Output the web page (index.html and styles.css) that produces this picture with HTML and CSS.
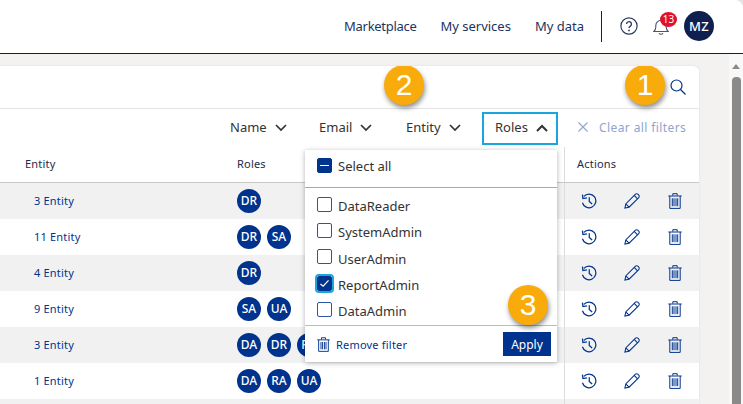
FILE: index.html
```html
<!DOCTYPE html>
<html>
<head>
    <title>Users</title>
    <link rel="stylesheet" href="styles.css">
</head>
<body>
    <svg class="defs">
        <symbol id="chev-down" viewBox="0 0 12 8"><path d="M1 1l5 5 5-5" fill="none" stroke="currentColor" stroke-width="1.700"/></symbol>
        <symbol id="chev-up" viewBox="0 0 12 8"><path d="M1 7l5-5 5 5" fill="none" stroke="currentColor" stroke-width="2"/></symbol>
        <symbol id="trash" viewBox="0 0 14 16"><path d="M4.800 2.600V.7h4.400v1.900M.3 3h13.400M1.800 3v12.400h10.400V3M4.300 5.300v7.900M6 5.300v7.900M8 5.300v7.900M9.700 5.300v7.900" fill="none" stroke="currentColor" stroke-width="1"/></symbol>
        <symbol id="history" viewBox="0 0 18 18"><path d="M3.200 3.800A7.700 7.700 0 1 1 1.600 11M1.600 1.800l.6 4.500 4.500-.7M9.300 4.800v4.600l3.200 3" fill="none" stroke="currentColor" stroke-width="1.400"/></symbol>
        <symbol id="pencil" viewBox="0 0 18 18"><path d="M1 17l1-4.700L12.900 1.400a1.900 1.900 0 0 1 2.700 0l1 1a1.900 1.900 0 0 1 0 2.700L5.700 16zM2 12.300l3.700 3.700M11.500 2.800l3.700 3.700" fill="none" stroke="currentColor" stroke-width="1.200"/></symbol>
    </svg>

    <header class="topbar">
        <nav class="topnav">
            <a>Marketplace</a>
            <a>My services</a>
            <a>My data</a>
        </nav>
        <div class="topicons">
            <svg class="help" viewBox="0 0 20 20"><circle cx="10" cy="10" r="9" fill="none" stroke="currentColor" stroke-width="1.300"/><path d="M7.300 7.800a2.700 2.700 0 1 1 4.200 2.300c-.9.600-1.500 1-1.500 2.200" fill="none" stroke="currentColor" stroke-width="1.500"/><circle cx="10" cy="14.900" r="1" fill="currentColor"/></svg>
            <div class="bell">
                <svg viewBox="0 0 16 16"><path d="M.8 12.500c1.300-1 2-2.200 2-4.500V6.500a5.200 5.200 0 0 1 10.400 0V8c0 2.300.7 3.500 2 4.500zM6 14.300c.6 1.200 3.400 1.200 4 0" fill="none" stroke="currentColor" stroke-width="1.100"/></svg>
                <span class="bell-count">13</span>
            </div>
            <div class="avatar">MZ</div>
        </div>
    </header>

    <main class="page">
        <section class="card">
            <div class="search-row">
                <svg class="search" viewBox="0 0 16 16"><circle cx="6.500" cy="6.500" r="5.500" fill="none" stroke="currentColor" stroke-width="1.200"/><path d="M10.500 10.500l5 5" stroke="currentColor" stroke-width="1.300"/></svg>
            </div>
            <div class="filter-row">
                <button class="filter filter-name">Name <svg class="chev"><use href="#chev-down"/></svg></button>
                <button class="filter filter-email">Email <svg class="chev"><use href="#chev-down"/></svg></button>
                <button class="filter filter-entity">Entity <svg class="chev"><use href="#chev-down"/></svg></button>
                <button class="filter filter-open">Roles <svg class="chev"><use href="#chev-up"/></svg></button>
                <button class="clear"><svg viewBox="0 0 10 10"><path d="M.5.500l9 9M9.500.500l-9 9" stroke="currentColor" stroke-width="1.100"/></svg>Clear all filters</button>
            </div>

            <div class="row row-head">
                <div class="cell-entity">Entity</div>
                <div class="cell-roles">Roles</div>
                <div class="cell-actions">Actions</div>
            </div>
            <div class="row shade">
                <div class="cell-entity"><a>3 Entity</a></div>
                <div class="cell-roles"><span class="chip">DR</span></div>
                <div class="cell-actions"><svg class="act"><use href="#history"/></svg><svg class="act"><use href="#pencil"/></svg><svg class="act"><use href="#trash"/></svg></div>
            </div>
            <div class="row">
                <div class="cell-entity"><a>11 Entity</a></div>
                <div class="cell-roles"><span class="chip">DR</span><span class="chip">SA</span></div>
                <div class="cell-actions"><svg class="act"><use href="#history"/></svg><svg class="act"><use href="#pencil"/></svg><svg class="act"><use href="#trash"/></svg></div>
            </div>
            <div class="row shade">
                <div class="cell-entity"><a>4 Entity</a></div>
                <div class="cell-roles"><span class="chip">DR</span></div>
                <div class="cell-actions"><svg class="act"><use href="#history"/></svg><svg class="act"><use href="#pencil"/></svg><svg class="act"><use href="#trash"/></svg></div>
            </div>
            <div class="row">
                <div class="cell-entity"><a>9 Entity</a></div>
                <div class="cell-roles"><span class="chip">SA</span><span class="chip">UA</span></div>
                <div class="cell-actions"><svg class="act"><use href="#history"/></svg><svg class="act"><use href="#pencil"/></svg><svg class="act"><use href="#trash"/></svg></div>
            </div>
            <div class="row shade">
                <div class="cell-entity"><a>3 Entity</a></div>
                <div class="cell-roles"><span class="chip">DA</span><span class="chip">DR</span><span class="chip">RA</span></div>
                <div class="cell-actions"><svg class="act"><use href="#history"/></svg><svg class="act"><use href="#pencil"/></svg><svg class="act"><use href="#trash"/></svg></div>
            </div>
            <div class="row">
                <div class="cell-entity"><a>1 Entity</a></div>
                <div class="cell-roles"><span class="chip">DA</span><span class="chip">RA</span><span class="chip">UA</span></div>
                <div class="cell-actions"><svg class="act"><use href="#history"/></svg><svg class="act"><use href="#pencil"/></svg><svg class="act"><use href="#trash"/></svg></div>
            </div>
            <div class="row row-cut shade">
                <div></div>
                <div></div>
                <div class="cell-actions"></div>
            </div>

            <div class="menu">
                <label class="menu-all"><span class="box box-mixed"></span>Select all</label>
                <div class="menu-list">
                    <label><span class="box"></span>DataReader</label>
                    <label><span class="box"></span>SystemAdmin</label>
                    <label><span class="box"></span>UserAdmin</label>
                    <label><span class="box box-on"><svg viewBox="0 0 12 10"><path d="M1.500 5.500l3 2.500 6-6.500" fill="none" stroke="#fff" stroke-width="1.300"/></svg></span>ReportAdmin</label>
                    <label><span class="box"></span>DataAdmin</label>
                </div>
                <div class="menu-foot">
                    <a class="remove"><svg><use href="#trash"/></svg>Remove filter</a>
                    <button class="apply">Apply</button>
                </div>
            </div>

            <span class="step step-1">1</span>
            <span class="step step-2">2</span>
            <span class="step step-3">3</span>
        </section>

        <aside class="scroll">
            <span class="scroll-up"></span>
            <span class="scroll-thumb"></span>
        </aside>
    </main>
</body>
</html>
```

FILE: styles.css
```css
* {
    box-sizing: border-box;
}
html, body {
    margin: 0;
    height: 404px;
    overflow: hidden;
}
body {
    font-family: "Noto Sans", sans-serif;
    font-size: 12px;
    color: #1e2a4a;
    background: #e4e4e4;
}
.defs {
    display: none;
}
button {
    font: inherit;
    background: none;
    border: none;
    padding: 0;
}

/* top bar */
.topbar {
    height: 54px;
    display: flex;
    justify-content: flex-end;
    align-items: center;
    border-bottom: 1px solid #0c2149;
    border-top-right-radius: 8px;
    background: #fff;
}
.topnav {
    display: flex;
    gap: 24px;
    font-size: 13px;
    color: #1d3361;
    padding-right: 17px;
    margin-top: -1px;
}
.topnav a:first-child {
    letter-spacing: -0.3px;
}
.topicons {
    width: 142px;
    height: 31px;
    margin-top: -1px;
    padding-left: 18px;
    border-left: 1px solid #0c2149;
    display: flex;
    align-items: center;
}
.help {
    width: 18px;
    height: 18px;
    color: #2a3a5e;
}
.bell {
    position: relative;
    width: 16px;
    height: 16px;
    margin: 2px 0 0 15px;
    color: #4a5672;
}
.bell svg {
    width: 16px;
    height: 16px;
    display: block;
}
.bell-count {
    position: absolute;
    left: 7px;
    top: -7px;
    width: 17px;
    height: 15px;
    border-radius: 50%;
    background: #e2112b;
    color: #fff;
    font-size: 10px;
    line-height: 15px;
    text-align: center;
}
.avatar {
    width: 30px;
    height: 30px;
    margin-left: 15px;
    border-radius: 50%;
    background: #0f2050;
    color: #fff;
    font-size: 13px;
    font-weight: 500;
    letter-spacing: 0.3px;
    line-height: 30px;
    text-align: center;
}

/* page */
.page {
    height: 350px;
    display: flex;
    justify-content: space-between;
    background: #f3f2f1;
    padding-top: 12px;
}
.card {
    position: relative;
    width: 699px;
    height: 338px;
    background: #fff;
    border-radius: 0 6px 0 0;
    box-shadow: 0 0 3px rgba(0, 0, 0, 0.08);
    overflow: hidden;
}
.search-row {
    height: 43px;
    border-bottom: 1px solid #e4e4e4;
    display: flex;
    justify-content: flex-end;
    align-items: center;
    padding-right: 13px;
}
.search {
    width: 16px;
    height: 16px;
    color: #00338d;
}
.filter-row {
    height: 38px;
    display: flex;
    align-items: center;
    padding-left: 230px;
}
.filter {
    display: flex;
    align-items: center;
    font-size: 13px;
    color: #333;
    padding-bottom: 2px;
}
.filter-name {
    width: 89px;
}
.filter-email {
    width: 87px;
}
.filter-entity {
    width: 76px;
}
.chev {
    width: 12px;
    height: 8px;
    margin-left: 8px;
    margin-top: 1px;
    color: #333;
}
.filter-open {
    width: 76px;
    height: 33px;
    padding-left: 11px;
    border: 2px solid #1aa5dc;
}
.clear {
    display: flex;
    align-items: center;
    gap: 11px;
    margin-left: 20px;
    padding-bottom: 2px;
    color: #8fa4cf;
    font-size: 12px;
    letter-spacing: 0.4px;
}
.clear svg {
    width: 10px;
    height: 10px;
}

/* table */
.row {
    height: 36px;
    display: grid;
    grid-template-columns: 237px 327px 135px;
    align-items: center;
}
.row-head {
    font-size: 11px;
    letter-spacing: 0.2px;
    border-bottom: 1px solid #c8c8c8;
}
.row-head > div:not(.cell-actions) {
    padding-bottom: 3px;
}
.row-cut {
    height: 5px;
}
.shade {
    background: #f1f1f1;
}
.cell-entity {
    padding: 0 0 2px 34px;
    font-size: 11px;
    letter-spacing: 0.2px;
    color: #00338d;
}
.row-head .cell-entity {
    padding-left: 25px;
    color: #1e2a4a;
}
.cell-roles {
    display: flex;
    gap: 6px;
}
.chip {
    width: 24px;
    height: 24px;
    border-radius: 50%;
    background: #00338d;
    color: #fff;
    font-size: 12px;
    font-weight: 500;
    line-height: 24px;
    text-align: center;
}
.cell-actions {
    height: 100%;
    border-left: 1px solid #dcdcdc;
    padding-left: 14px;
    display: flex;
    align-items: center;
    gap: 23px;
    color: #00338d;
}
.row-head .cell-actions {
    padding: 0 0 3px 12px;
    color: #1e2a4a;
}
.act {
    width: 20px;
    height: 16px;
    margin-bottom: 1px;
}

/* roles dropdown */
.menu {
    position: absolute;
    left: 305px;
    top: 84px;
    width: 252px;
    height: 212px;
    background: #fff;
    box-shadow: 0 1px 5px rgba(0, 0, 0, 0.3);
    font-size: 13px;
    color: #333;
}
.menu label {
    display: flex;
    align-items: center;
    gap: 6px;
    padding-left: 12px;
}
.menu-all {
    height: 38px;
    border-bottom: 1px solid #aaa;
    margin-bottom: 5px;
    padding-bottom: 6px;
}
.menu-list {
    height: 133px;
    border-bottom: 1px solid #bbb;
}
.menu-list label {
    height: 26.300px;
}
.menu-list .box {
    margin-bottom: 4px;
}
.box {
    width: 15px;
    height: 15px;
    border: 1px solid #2c55a4;
    border-radius: 2px;
    display: flex;
    align-items: center;
    justify-content: center;
}
.box-mixed {
    background: #00338d;
    border-color: #00338d;
}
.box-mixed::before {
    content: "";
    width: 9px;
    height: 1.500px;
    background: #fff;
}
.box-on {
    background: #00338d;
    border-color: #00338d;
    outline: 2px solid #1aa5dc;
}
.box-on svg {
    width: 11px;
    height: 9px;
}
.menu-foot {
    display: flex;
    justify-content: space-between;
    align-items: flex-start;
    padding: 6px 6px 0 12px;
}
.remove {
    display: flex;
    align-items: center;
    gap: 6px;
    margin-top: 5px;
    font-size: 11px;
    letter-spacing: 0.2px;
    color: #00338d;
}
.remove svg {
    width: 13px;
    height: 15px;
}
.apply {
    width: 48px;
    height: 24px;
    background: #00338d;
    color: #fff;
    font-size: 12px;
}

/* numbered callouts */
.step {
    position: absolute;
    width: 40px;
    height: 40px;
    border-radius: 50%;
    background: #f9ab0b;
    color: #fff;
    font-family: "Liberation Sans", Arial, sans-serif;
    font-size: 30px;
    line-height: 40px;
    text-align: center;
    box-shadow: 1px 3px 5px rgba(0, 0, 0, 0.45);
}
.step-1 {
    left: 625px;
    top: -1px;
}
.step-2 {
    left: 384px;
    top: -1px;
}
.step-3 {
    left: 508px;
    top: 219px;
}

/* scrollbar */
.scroll {
    width: 14px;
    margin-top: -12px;
    background: #f8f8f8;
    overflow: hidden;
}
.scroll-up {
    display: block;
    width: 0;
    margin: 10px 0 8px 3px;
    border: 4.500px solid transparent;
    border-top: none;
    border-bottom: 5px solid #8a8a8a;
}
.scroll-thumb {
    display: block;
    width: 9px;
    height: 327px;
    margin-left: 3px;
    background: #8a8a8a;
    border-radius: 4px 4px 0 0;
}
```
